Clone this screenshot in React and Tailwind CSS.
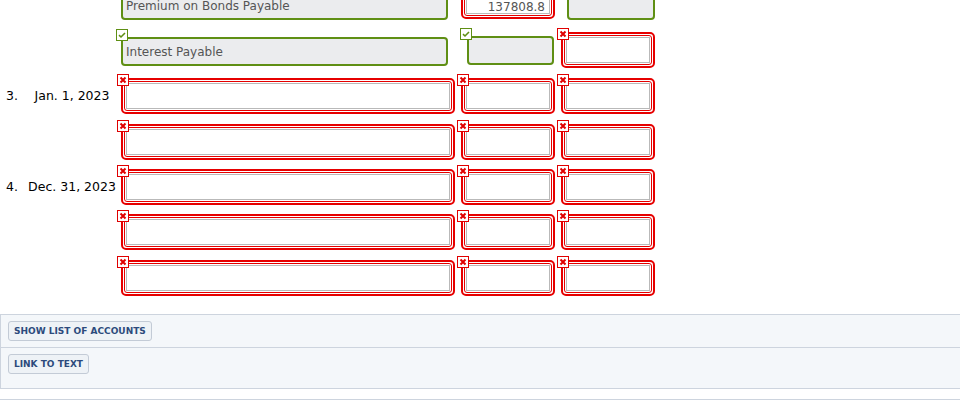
import React from "react";

const FONT = { fontFamily: '"DejaVu Sans", Verdana, sans-serif' };

function XMark({ className = "" }) {
  return (
    <div className={"absolute z-10 w-[12px] h-[12px] bg-white border border-[#e00000] flex items-center justify-center " + className}>
      <svg width="8" height="8" viewBox="0 0 8 8">
        <path d="M1.5 1.5 L6.5 6.5 M6.5 1.5 L1.5 6.5" stroke="#e00000" strokeWidth="2" strokeLinecap="butt" />
      </svg>
    </div>
  );
}

function CheckMark({ className = "" }) {
  return (
    <div className={"absolute z-10 w-[12px] h-[12px] bg-white border border-[#5f8f14] flex items-center justify-center " + className}>
      <svg width="8" height="8" viewBox="0 0 8 8">
        <path d="M1 4.2 L3 6 L7 2" stroke="#5f8f14" strokeWidth="1.6" fill="none" />
      </svg>
    </div>
  );
}

function RedBox({ width, text = "", mark = true, align = "items-center" }) {
  return (
    <div className={"relative h-[36px] " + width}>
      {mark && <XMark className="left-[-4px] top-[-4px]" />}
      <div className="h-full border-2 border-[#e60000] rounded-[5px] bg-white p-px">
        <div className="h-full border border-[#e60000] rounded-[3px] bg-white p-px">
          <div className={"h-full border border-[#b9b9b9] bg-white flex justify-end pr-[4px] text-[12px] text-[#555] " + align}>
            {text}
          </div>
        </div>
      </div>
    </div>
  );
}

function GreenBox({ className = "", text = "" }) {
  return (
    <div className={"h-[29px] border-2 border-[#5f8f14] rounded-[4px] bg-[#ebecee] flex items-center pl-[3px] text-[12px] text-[#555] " + className}>
      {text}
    </div>
  );
}

function Label({ num, date }) {
  return (
    <div className="w-[121px] h-full flex items-center text-[12.5px] text-black">
      <span className="w-[24px] pl-[6px]">{num}</span>
      <span className="w-[96px] text-center">{date}</span>
    </div>
  );
}

function Cell3({ label }) {
  return (
    <div className="flex h-[36px]">
      {label ? <Label num={label[0]} date={label[1]} /> : <div className="w-[121px]" />}
      <RedBox width="w-[334px]" />
      <div className="ml-[6px]"><RedBox width="w-[94px]" /></div>
      <div className="ml-[6px]"><RedBox width="w-[94px]" /></div>
    </div>
  );
}

export default function App() {
  return (
    <div className="w-[960px] h-[404px] overflow-hidden bg-white" style={FONT}>
      <div className="flex flex-col">
        {/* Premium row */}
        <div className="flex h-[36px] mt-[-17px]">
          <div className="w-[121px]" />
          <div className="relative w-[334px] h-full flex items-end">
            <GreenBox className="w-[327px] mb-[-1px]" text="Premium on Bonds Payable" />
          </div>
          <div className="ml-[6px]">
            <RedBox width="w-[94px]" text="137808.8" align="items-end leading-none" />
          </div>
          <div className="ml-[6px] relative w-[94px] h-full flex items-end justify-end">
            <GreenBox className="w-[88px] mb-[-1px]" />
          </div>
        </div>

        {/* Interest row */}
        <div className="flex h-[36px] mt-[13px]">
          <div className="w-[121px]" />
          <div className="relative w-[334px] h-full">
            <CheckMark className="left-[-5px] top-[-3px]" />
            <GreenBox className="w-[327px] mt-[5px]" text="Interest Payable" />
          </div>
          <div className="ml-[6px] relative w-[94px] h-full">
            <CheckMark className="left-[-1px] top-[-4px]" />
            <GreenBox className="w-[87px] ml-[6px] mt-[4px]" />
          </div>
          <div className="ml-[6px]">
            <RedBox width="w-[94px]" />
          </div>
        </div>

        <div className="mt-[10px]"><Cell3 label={["3.", "Jan. 1, 2023"]} /></div>
        <div className="mt-[10px]"><Cell3 /></div>
        <div className="mt-[9px]"><Cell3 label={["4.", "Dec. 31, 2023"]} /></div>
        <div className="mt-[9px]"><Cell3 /></div>
        <div className="mt-[10px]"><Cell3 /></div>
      </div>

      {/* Footer panel */}
      <div className="mt-[18px] w-[970px] border-l border-y border-[#cdd4de] bg-[#f4f7fa]">
        <div className="h-[33px] pt-[6px] pl-[7px] border-b border-[#cdd4de] flex items-start">
          <button className="h-[20px] px-[5px] rounded-[3px] border border-[#c3cbd6] bg-[#eef2f6] text-[9px] font-bold text-[#2c4a7c] leading-none">
            SHOW LIST OF ACCOUNTS
          </button>
        </div>
        <div className="h-[40px] pt-[6px] pl-[7px] flex items-start">
          <button className="h-[20px] px-[5px] rounded-[3px] border border-[#c3cbd6] bg-[#eef2f6] text-[9px] font-bold text-[#2c4a7c] leading-none">
            LINK TO TEXT
          </button>
        </div>
      </div>
      <div className="mt-[10px] h-[20px] border-t border-[#cdd4de] bg-white" />
    </div>
  );
}
